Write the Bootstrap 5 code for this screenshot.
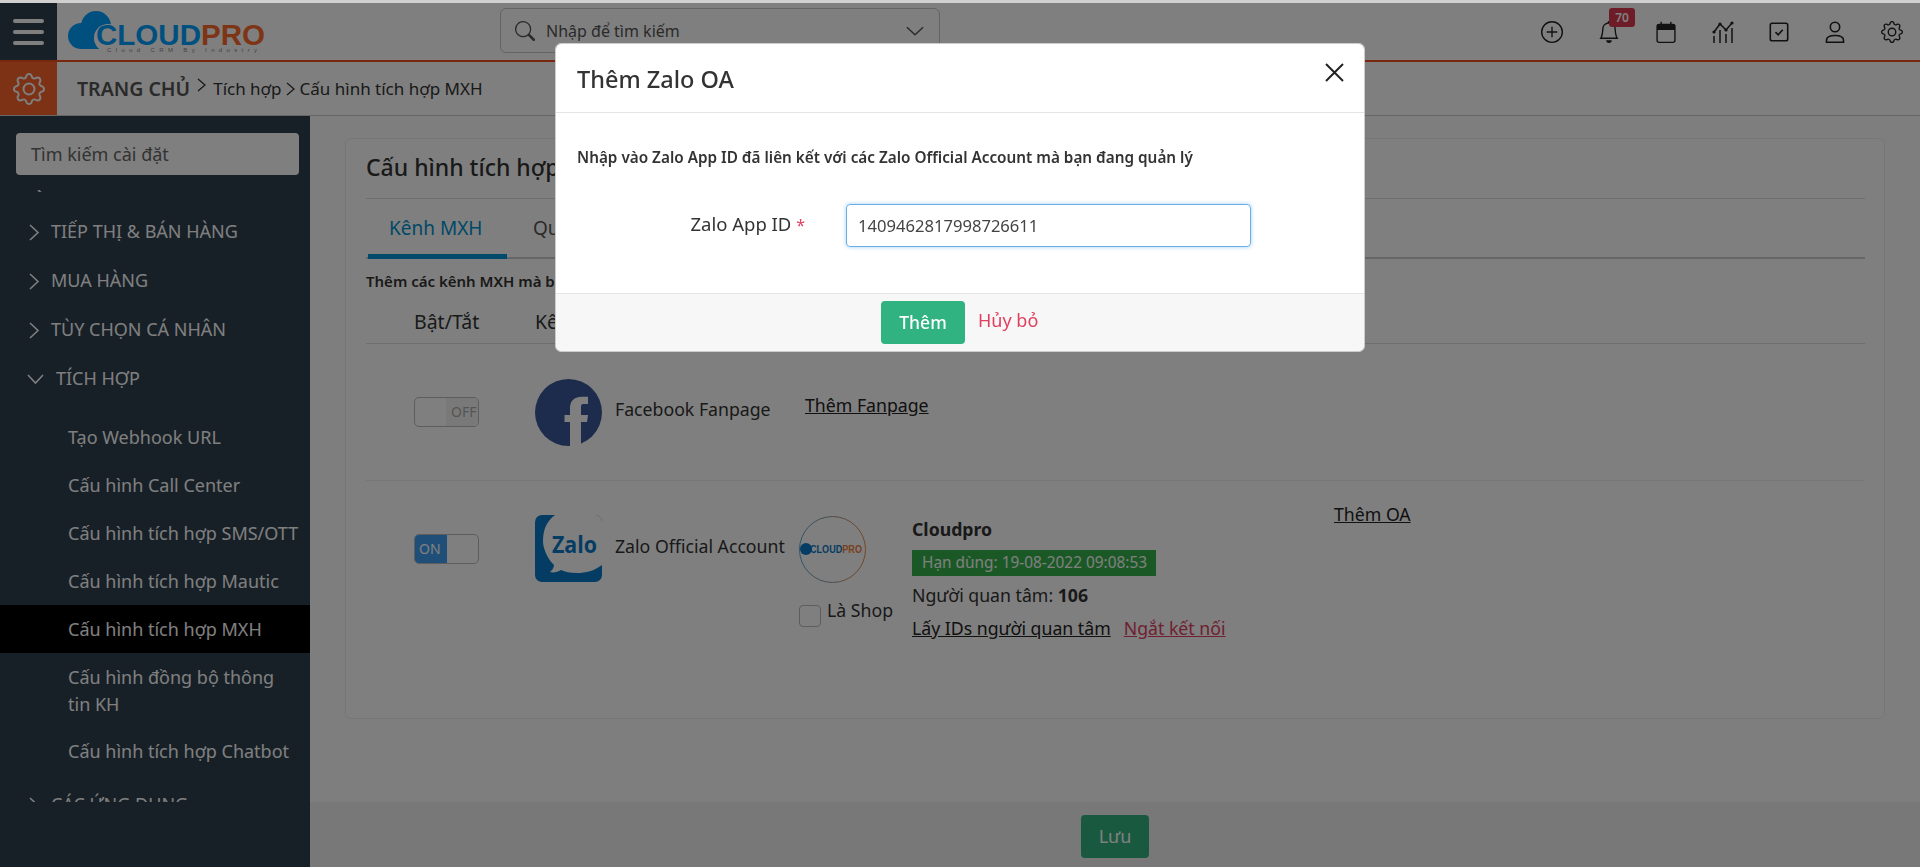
<!DOCTYPE html>
<html lang="vi">
<head>
<meta charset="utf-8">
<title>Cấu hình tích hợp MXH</title>
<link href="https://cdn.jsdelivr.net/npm/bootstrap@5.3.0/dist/css/bootstrap.min.css" rel="stylesheet">
<style>
html,body{height:867px;overflow:hidden}
body{font-family:"Noto Sans","Open Sans",sans-serif;font-size:18px;line-height:25.5px;color:#333;background:#d0d0d0;padding-top:3px}
.modal-backdrop{top:3px;opacity:.5}
.cp-top{height:57px;background:#fff}
.cp-burger{width:57px;background:#2e3e4e;gap:7px;padding:0 13px}
.cp-burger span{display:block;height:4px;border-radius:2px;background:#fff}
.cp-logo{width:210px;margin-left:10px}
.cp-search{width:440px;height:45px;margin:5px 0 0 223px;border:1px solid #c8c8c8;border-radius:6px;color:#555;padding:0 14px;font-size:16px}
.cp-search span{margin:2px 0 0 11px}
.cp-tool{width:57px;color:#222}
.cp-tool-slim{width:55px}
.cp-tool svg{width:22px;height:22px}
.cp-count{position:absolute;left:29px;top:5px;width:26px;height:19px;border-radius:3px;background:#dc3b50;color:#fff;font-size:12px;font-weight:600;line-height:19px;text-align:center}
.cp-crumb{height:56px;background:#fff;border-top:2px solid #f0501e;border-bottom:1px solid #ccc}
.cp-crumb-ico{width:57px;background:#fa622a;color:#fff}
.cp-crumb-txt{margin-left:20px;color:#333;gap:5px;font-size:17px}
.cp-crumb-txt b{font-size:19.5px;font-weight:600;color:#555;margin-right:1px}
.cp-crumb-sep2{margin:0 -2px}
.cp-side{width:310px;background:#2e3e4e;color:#fff}
.cp-side-search{margin:17px 11px 15px 16px;height:42px;background:#fff;border:0;border-radius:4px;color:#666;padding:2px 15px 0;display:flex;align-items:center}
.cp-side-list{height:612px;overflow:hidden}
.cp-group{height:49px;padding-left:29px;padding-top:1px;gap:11px;margin:0;white-space:nowrap}
.cp-group-last{margin-top:5px}
.cp-sub{height:48px;padding-left:68px;padding-top:2px;display:flex;align-items:center;white-space:nowrap}
.cp-sub-first{margin-top:10px}
.cp-sub-on{background:#000}
.cp-sub-tall{height:74px;padding-right:20px;line-height:27px;white-space:normal}
.cp-main{background:#fcfcfc}
.cp-body{padding:22px 35px 0}
.cp-card{height:581px;background:#fff;border:1px solid #ececec;border-radius:6px;padding:0 19px 0 20px;font-size:17.7px}
.cp-title{height:60px;padding-top:16px;font-size:23px;font-weight:500;color:#333;border-bottom:1px solid #ddd}
.cp-tabs{height:60px;border-bottom:2px solid #ccc}
.cp-tab{height:60px;padding:0 22px;display:flex;align-items:center;color:#555;margin-right:4px;font-size:19px}
.cp-tab-on{color:#0090d0;border-bottom:5px solid #0096d8;padding:5px 0 0 21px;width:139px;margin-left:2px}
.cp-note{font-size:15px;font-weight:600;margin:0;height:44px;padding-top:10px;color:#333;white-space:nowrap}
.cp-line{display:grid;grid-template-columns:169px 80px 184px 113px 422px 1fr}
.cp-head{height:41px;border-bottom:1px solid #ddd;align-items:start;padding-top:6px;font-size:19.5px}
.cp-head>div:first-child{padding-left:48px}
.cp-rowa{height:137px;border-bottom:1px solid #eee}
.cp-switch{width:65px;height:30px;margin:53px 0 0 48px;border:1px solid #bbb;border-radius:5px;overflow:hidden;font-size:14px;color:#aaa}
.cp-switch i{font-style:normal;flex:1;display:flex;align-items:center;padding-left:4px}
.cp-switch .cp-on{background:#3f9ef0;color:#fff}
.cp-switch .cp-off{background:#f3f3f3;padding-left:5px}
.cp-pic{width:67px;height:67px;margin-top:35px;display:block}
.cp-label{padding-top:53px}
.cp-lnk{color:#222;text-decoration:underline}
.cp-lnk-red{color:#e04060;text-decoration:underline;margin-left:13px}
.cp-add{padding-top:49px}
.cp-oa-add{padding-top:21px}
.cp-rowb .cp-pic{margin-top:34px}
.cp-rowb .cp-label{padding-top:53px}
.cp-rowb .cp-switch{margin-top:53px}
.cp-oa{width:67px;height:67px;margin-top:35px;display:block}
.cp-shop{gap:6px;margin-top:18px;white-space:nowrap}
.cp-shop span{width:22px;height:22px;border:1px solid #bbb;border-radius:4px;background:#fff;flex:none;margin-top:4px}
.cp-shop em{font-style:normal;margin-top:-3px}
.cp-info{padding-top:36px}
.cp-info strong{font-weight:700}
.cp-exp{width:244px;height:26px;background:#35b34a;color:#fff;font-size:15.4px;padding-left:10px;display:flex;align-items:center;margin:7px 0 7px;white-space:nowrap}
.cp-foot{height:65px;background:#f0f0f0}
.cp-save{width:68px;height:43px;background:#30b380;color:#fff;border:0;border-radius:4px;margin-left:771px;margin-top:13px;font-size:18px}
.modal-dialog{max-width:810px;margin:43px auto 0}
.modal-content{border:1px solid #ccc;border-radius:6px;overflow:hidden}
.cp-mhead{height:69px;padding:0 21px;border-bottom:1px solid #e5e5e5}
.cp-mhead h5{font-size:23.5px;font-weight:500;margin:0;color:#333;padding-top:3px}
.cp-x{background:none;border:0;padding:0;margin-top:-11px;margin-right:-1px;color:#222;line-height:0}
.cp-mbody{height:180px;padding:32px 21px 0}
.cp-mbody p{font-size:15.3px;font-weight:600;color:#333;margin:0 0 33px;white-space:nowrap}
.cp-fld-l{width:269px;text-align:right;padding-right:41px;color:#333;font-size:18.500px}
.cp-fld-l span{color:#e04060;font-size:16px}
.cp-fld-i{width:405px;height:43px;border:1px solid #66afe9;border-radius:4px;box-shadow:0 0 4px rgba(102,175,233,.6);padding:2px 11px 0;color:#444;font-size:16.6px}
.cp-mfoot{height:58px;background:#f7f7f7;border-top:1px solid #e5e5e5;padding-left:325px;padding-top:7px;gap:13px}
.cp-madd{width:84px;height:43px;background:#30b380;color:#fff;border:0;border-radius:4px;font-weight:500;font-size:17.5px}
.cp-mcancel{color:#e04060;text-decoration:none;margin-top:7px}
</style>
</head>
<body>
<header class="cp-top d-flex">
  <div class="cp-burger d-flex flex-column justify-content-center flex-shrink-0"><span></span><span></span><span></span></div>
  <div class="cp-logo d-flex align-items-center">
    <svg width="210" height="50" viewBox="0 0 210 50">
      <g fill="#00a0fe"><circle cx="14" cy="29" r="13"/><circle cx="29" cy="19" r="15"/><rect x="13" y="26" width="36" height="16"/></g>
      <circle cx="41" cy="31" r="14" fill="#fff"/>
      <text x="29" y="38" font-family="Liberation Sans,sans-serif" font-size="29" font-weight="700" textLength="169" lengthAdjust="spacingAndGlyphs"><tspan fill="#00a0fe">CLOUD</tspan><tspan fill="#fa6a2a">PRO</tspan></text>
      <text x="40" y="45" font-family="Liberation Sans,sans-serif" font-size="6" fill="#888" textLength="150">Cloud CRM By Industry</text>
    </svg>
  </div>
  <div class="cp-search d-flex align-items-center flex-shrink-0">
    <svg width="20" height="20" viewBox="0 0 16 16" fill="currentColor"><path d="M11.742 10.344a6.5 6.5 0 1 0-1.397 1.398h-.001c.03.04.062.078.098.115l3.85 3.85a1 1 0 0 0 1.415-1.414l-3.85-3.85a1.007 1.007 0 0 0-.115-.1zM12 6.5a5.5 5.5 0 1 1-11 0 5.5 5.5 0 0 1 11 0z"/></svg>
    <span class="flex-grow-1">Nhập để tìm kiếm</span>
    <svg width="20" height="20" viewBox="0 0 16 16" fill="none" stroke="currentColor" stroke-width="1.2"><path d="M1.5 5l6.5 6 6.5-6"/></svg>
  </div>
  <div class="d-flex ms-auto">
    <div class="cp-tool d-flex align-items-center justify-content-center"><svg viewBox="0 0 16 16" fill="currentColor"><path d="M8 15A7 7 0 1 1 8 1a7 7 0 0 1 0 14zm0 1A8 8 0 1 0 8 0a8 8 0 0 0 0 16z"/><path d="M8 4a.5.5 0 0 1 .5.5v3h3a.5.5 0 0 1 0 1h-3v3a.5.5 0 0 1-1 0v-3h-3a.5.5 0 0 1 0-1h3v-3A.5.5 0 0 1 8 4z"/></svg></div>
    <div class="cp-tool d-flex align-items-center justify-content-center position-relative"><svg viewBox="0 0 16 16" fill="currentColor"><path d="M8 16a2 2 0 0 0 2-2H6a2 2 0 0 0 2 2zM8 1.918l-.797.161A4.002 4.002 0 0 0 4 6c0 .628-.134 2.197-.459 3.742-.16.767-.376 1.566-.663 2.258h10.244c-.287-.692-.502-1.49-.663-2.258C12.134 8.197 12 6.628 12 6a4.002 4.002 0 0 0-3.203-3.92L8 1.917zM14.22 12c.223.447.481.801.78 1H1c.299-.199.557-.553.78-1C2.68 10.2 3 6.88 3 6c0-2.42 1.72-4.44 4.005-4.901a1 1 0 1 1 1.99 0A5.002 5.002 0 0 1 13 6c0 .88.32 4.2 1.22 6z"/></svg><span class="cp-count">70</span></div>
    <div class="cp-tool d-flex align-items-center justify-content-center"><svg viewBox="0 0 16 16" fill="none" stroke="currentColor"><rect x="1.5" y="2.5" width="13" height="13" rx="1.5"/><path d="M2 3h12v3H2z" fill="currentColor"/><path d="M4.5 .5v2M11.5 .5v2"/></svg></div>
    <div class="cp-tool d-flex align-items-center justify-content-center"><svg viewBox="0 0 22 22" fill="none" stroke="currentColor" stroke-width="1.5"><path d="M2 11 8 3l6 6 6-7"/><path d="M2 15v7M8 9v13M14 13v9M20 7v15"/><g fill="currentColor" stroke="none"><circle cx="2" cy="11" r="1.6"/><circle cx="8" cy="3" r="1.6"/><circle cx="14" cy="9" r="1.6"/><circle cx="20" cy="2" r="1.6"/></g></svg></div>
    <div class="cp-tool cp-tool-slim d-flex align-items-center justify-content-center"><svg viewBox="0 0 22 22" fill="none" stroke="currentColor" stroke-width="1.6"><rect x="2.300" y="2.300" width="17.400" height="17.400" rx="1.800"/><path d="M7.500 11.200l2.700 2.600 4.500-5"/></svg></div>
    <div class="cp-tool d-flex align-items-center justify-content-center"><svg viewBox="0 0 22 22" fill="none" stroke="currentColor" stroke-width="1.6"><circle cx="11" cy="6" r="4.700"/><path d="M2.500 21.200v-2c0-2.700 3-4.700 8.500-4.700s8.500 2 8.500 4.700v2z"/></svg></div>
    <div class="cp-tool d-flex align-items-center justify-content-center"><svg viewBox="0 0 16 16" fill="currentColor"><path d="M8 4.754a3.246 3.246 0 1 0 0 6.492 3.246 3.246 0 0 0 0-6.492zM5.754 8a2.246 2.246 0 1 1 4.492 0 2.246 2.246 0 0 1-4.492 0z"/><path d="M9.796 1.343c-.527-1.79-3.065-1.79-3.592 0l-.094.319a.873.873 0 0 1-1.255.52l-.292-.16c-1.64-.892-3.433.902-2.54 2.541l.159.292a.873.873 0 0 1-.52 1.255l-.319.094c-1.79.527-1.79 3.065 0 3.592l.319.094a.873.873 0 0 1 .52 1.255l-.16.292c-.892 1.64.901 3.434 2.541 2.54l.292-.159a.873.873 0 0 1 1.255.52l.094.319c.527 1.79 3.065 1.79 3.592 0l.094-.319a.873.873 0 0 1 1.255-.52l.292.16c1.64.893 3.434-.902 2.54-2.541l-.159-.292a.873.873 0 0 1 .52-1.255l.319-.094c1.79-.527 1.79-3.065 0-3.592l-.319-.094a.873.873 0 0 1-.52-1.255l.16-.292c.893-1.64-.902-3.433-2.541-2.54l-.292.159a.873.873 0 0 1-1.255-.52l-.094-.319zm-2.633.283c.246-.835 1.428-.835 1.674 0l.094.319a1.873 1.873 0 0 0 2.693 1.115l.291-.16c.764-.415 1.6.42 1.184 1.185l-.159.292a1.873 1.873 0 0 0 1.116 2.692l.318.094c.835.246.835 1.428 0 1.674l-.319.094a1.873 1.873 0 0 0-1.115 2.693l.16.291c.415.764-.42 1.6-1.185 1.184l-.291-.159a1.873 1.873 0 0 0-2.693 1.116l-.094.318c-.246.835-1.428.835-1.674 0l-.094-.319a1.873 1.873 0 0 0-2.692-1.115l-.292.16c-.764.415-1.6-.42-1.184-1.185l.159-.291A1.873 1.873 0 0 0 1.945 8.93l-.319-.094c-.835-.246-.835-1.428 0-1.674l.319-.094A1.873 1.873 0 0 0 3.06 4.377l-.16-.292c-.415-.764.42-1.6 1.185-1.184l.292.159a1.873 1.873 0 0 0 2.692-1.115l.094-.319z"/></svg></div>
  </div>
</header>
<div class="cp-crumb d-flex">
  <div class="cp-crumb-ico d-flex align-items-center justify-content-center"><svg width="32" height="32" viewBox="0 0 16 16" fill="currentColor"><path d="M8 4.754a3.246 3.246 0 1 0 0 6.492 3.246 3.246 0 0 0 0-6.492zM5.754 8a2.246 2.246 0 1 1 4.492 0 2.246 2.246 0 0 1-4.492 0z"/><path d="M9.796 1.343c-.527-1.79-3.065-1.79-3.592 0l-.094.319a.873.873 0 0 1-1.255.52l-.292-.16c-1.64-.892-3.433.902-2.54 2.541l.159.292a.873.873 0 0 1-.52 1.255l-.319.094c-1.79.527-1.79 3.065 0 3.592l.319.094a.873.873 0 0 1 .52 1.255l-.16.292c-.892 1.64.901 3.434 2.541 2.54l.292-.159a.873.873 0 0 1 1.255.52l.094.319c.527 1.79 3.065 1.79 3.592 0l.094-.319a.873.873 0 0 1 1.255-.52l.292.16c1.64.893 3.434-.902 2.54-2.541l-.159-.292a.873.873 0 0 1 .52-1.255l.319-.094c1.79-.527 1.79-3.065 0-3.592l-.319-.094a.873.873 0 0 1-.52-1.255l.16-.292c.893-1.64-.902-3.433-2.541-2.54l-.292.159a.873.873 0 0 1-1.255-.52l-.094-.319zm-2.633.283c.246-.835 1.428-.835 1.674 0l.094.319a1.873 1.873 0 0 0 2.693 1.115l.291-.16c.764-.415 1.6.42 1.184 1.185l-.159.292a1.873 1.873 0 0 0 1.116 2.692l.318.094c.835.246.835 1.428 0 1.674l-.319.094a1.873 1.873 0 0 0-1.115 2.693l.16.291c.415.764-.42 1.6-1.185 1.184l-.291-.159a1.873 1.873 0 0 0-2.693 1.116l-.094.318c-.246.835-1.428.835-1.674 0l-.094-.319a1.873 1.873 0 0 0-2.692-1.115l-.292.16c-.764.415-1.6-.42-1.184-1.185l.159-.291A1.873 1.873 0 0 0 1.945 8.93l-.319-.094c-.835-.246-.835-1.428 0-1.674l.319-.094A1.873 1.873 0 0 0 3.06 4.377l-.16-.292c-.415-.764.42-1.6 1.185-1.184l.292.159a1.873 1.873 0 0 0 2.692-1.115l.094-.319z"/></svg></div>
  <div class="cp-crumb-txt d-flex align-items-center">
    <b>TRANG CHỦ</b>
    <svg width="12" height="14" viewBox="0 0 12 14" fill="none" stroke="currentColor" stroke-width="1.3" class="mb-2"><path d="M2 1l7 6-7 6"/></svg>
    <span>Tích hợp</span>
    <svg width="12" height="14" viewBox="0 0 12 14" fill="none" stroke="currentColor" stroke-width="1.3" class="cp-crumb-sep2"><path d="M2 1l7 6-7 6"/></svg>
    <span>Cấu hình tích hợp MXH</span>
  </div>
</div>
<div class="d-flex" style="height:751px">
  <aside class="cp-side flex-shrink-0">
    <div class="cp-side-search">Tìm kiếm cài đặt</div>
    <div class="cp-side-list">
      <div class="cp-group d-flex align-items-center" style="margin-top:-32px"><span>QUẢN LÝ CHUNG</span></div>
      <div class="cp-group d-flex align-items-center"><svg width="11" height="17" viewBox="0 0 11 17" fill="none" stroke="currentColor" stroke-width="1.6"><path d="M1 1l8 7.5-8 7.5"/></svg><span>TIẾP THỊ &amp; BÁN HÀNG</span></div>
      <div class="cp-group d-flex align-items-center"><svg width="11" height="17" viewBox="0 0 11 17" fill="none" stroke="currentColor" stroke-width="1.6"><path d="M1 1l8 7.5-8 7.5"/></svg><span>MUA HÀNG</span></div>
      <div class="cp-group d-flex align-items-center"><svg width="11" height="17" viewBox="0 0 11 17" fill="none" stroke="currentColor" stroke-width="1.6"><path d="M1 1l8 7.5-8 7.5"/></svg><span>TÙY CHỌN CÁ NHÂN</span></div>
      <div class="cp-group d-flex align-items-center" style="padding-left:27px;gap:12px"><svg width="17" height="11" viewBox="0 0 17 11" fill="none" stroke="currentColor" stroke-width="1.6"><path d="M1 1l7.500 8 7.500-8"/></svg><span>TÍCH HỢP</span></div>
      <div class="cp-sub cp-sub-first">Tạo Webhook URL</div>
      <div class="cp-sub">Cấu hình Call Center</div>
      <div class="cp-sub">Cấu hình tích hợp SMS/OTT</div>
      <div class="cp-sub">Cấu hình tích hợp Mautic</div>
      <div class="cp-sub cp-sub-on">Cấu hình tích hợp MXH</div>
      <div class="cp-sub cp-sub-tall">Cấu hình đồng bộ thông tin KH</div>
      <div class="cp-sub">Cấu hình tích hợp Chatbot</div>
      <div class="cp-group cp-group-last d-flex align-items-center"><svg width="11" height="17" viewBox="0 0 11 17" fill="none" stroke="currentColor" stroke-width="1.6"><path d="M1 1l8 7.5-8 7.5"/></svg><span>CÁC ỨNG DỤNG</span></div>
    </div>
  </aside>
  <main class="cp-main flex-grow-1 d-flex flex-column">
    <div class="cp-body flex-grow-1">
      <div class="cp-card">
        <div class="cp-title">Cấu hình tích hợp MXH</div>
        <div class="cp-tabs d-flex">
          <div class="cp-tab cp-tab-on">Kênh MXH</div>
          <div class="cp-tab">Quản lý</div>
        </div>
        <p class="cp-note">Thêm các kênh MXH mà bạn muốn kết nối với hệ thống</p>
        <div class="cp-line cp-head"><div>Bật/Tắt</div><div>Kênh</div></div>
        <div class="cp-line cp-rowa">
          <div><div class="cp-switch d-flex"><i></i><i class="cp-off">OFF</i></div></div>
          <div><svg class="cp-pic" viewBox="0 0 67 67"><circle cx="33.500" cy="33.500" r="33.500" fill="#3b5998"/><path d="M35 67V43H29.500V36H35V29C35 21 40 17.700 47 17.700H53V25H48C46.500 25 46 26 46 28V36H53L52 43H46V67z" fill="#fff"/></svg></div>
          <div class="cp-label text-nowrap">Facebook Fanpage</div>
          <div class="cp-add text-nowrap" style="margin-left:6px"><a href="#" class="cp-lnk">Thêm Fanpage</a></div>
        </div>
        <div class="cp-line cp-rowb">
          <div><div class="cp-switch d-flex"><i class="cp-on">ON</i><i></i></div></div>
          <div><svg class="cp-pic" viewBox="0 0 67 67"><rect width="67" height="67" rx="7" fill="#0a78c8"/><path d="M20 0h40a7 7 0 0 1 7 7v43c-8 6-16 8-25 8-7 0-12-1-16-3-3 2-8 3-11 2 2-2 4-4 4-7C11 42 8 32 8 26 8 14 12 6 20 0z" fill="#fff"/><text x="39.500" y="38" text-anchor="middle" font-family="Open Sans,sans-serif" font-size="24" font-weight="700" fill="#0a78c8" textLength="45" lengthAdjust="spacingAndGlyphs">Zalo</text></svg></div>
          <div class="cp-label text-nowrap">Zalo Official Account</div>
          <div>
            <svg class="cp-oa" viewBox="0 0 67 67"><defs><linearGradient id="cpring" x1="0" x2="1" y1="0" y2="0"><stop offset="0" stop-color="#5aa8d8"/><stop offset="1" stop-color="#e58a50"/></linearGradient></defs><circle cx="33.500" cy="33.500" r="33" fill="#fff" stroke="url(#cpring)"/><circle cx="7" cy="33" r="6" fill="#0a78c8"/><text x="11" y="37" font-family="Liberation Sans,sans-serif" font-size="11" font-weight="700" textLength="52" lengthAdjust="spacingAndGlyphs"><tspan fill="#0a78c8">CLOUD</tspan><tspan fill="#f08040">PRO</tspan></text></svg>
            <div class="cp-shop d-flex"><span></span><em>Là Shop</em></div>
          </div>
          <div class="cp-info">
            <strong>Cloudpro</strong>
            <div class="cp-exp">Hạn dùng: 19-08-2022 09:08:53</div>
            <div class="mb-2">Người quan tâm: <strong>106</strong></div>
            <div class="text-nowrap"><a href="#" class="cp-lnk">Lấy IDs người quan tâm</a><a href="#" class="cp-lnk-red">Ngắt kết nối</a></div>
          </div>
          <div class="cp-oa-add"><a href="#" class="cp-lnk">Thêm OA</a></div>
        </div>
      </div>
    </div>
    <div class="cp-foot"><button class="cp-save" type="button">Lưu</button></div>
  </main>
</div>
<div class="modal-backdrop show"></div>
<div class="modal d-block" tabindex="-1">
  <div class="modal-dialog">
    <div class="modal-content">
      <div class="cp-mhead d-flex align-items-center justify-content-between">
        <h5>Thêm Zalo OA</h5>
        <button class="cp-x" type="button" aria-label="Đóng"><svg width="19" height="19" viewBox="0 0 19 19" fill="none" stroke="currentColor" stroke-width="2"><path d="M1 1l17 17M18 1L1 18"/></svg></button>
      </div>
      <div class="cp-mbody">
        <p>Nhập vào Zalo App ID đã liên kết với các Zalo Official Account mà bạn đang quản lý</p>
        <div class="d-flex align-items-center">
          <div class="cp-fld-l">Zalo App ID <span>*</span></div>
          <div class="cp-fld-i d-flex align-items-center">1409462817998726611</div>
        </div>
      </div>
      <div class="cp-mfoot d-flex">
        <button class="cp-madd" type="button">Thêm</button>
        <a class="cp-mcancel" href="#">Hủy bỏ</a>
      </div>
    </div>
  </div>
</div>
<script src="https://cdn.jsdelivr.net/npm/bootstrap@5.3.0/dist/js/bootstrap.bundle.min.js"></script>
</body>
</html>
